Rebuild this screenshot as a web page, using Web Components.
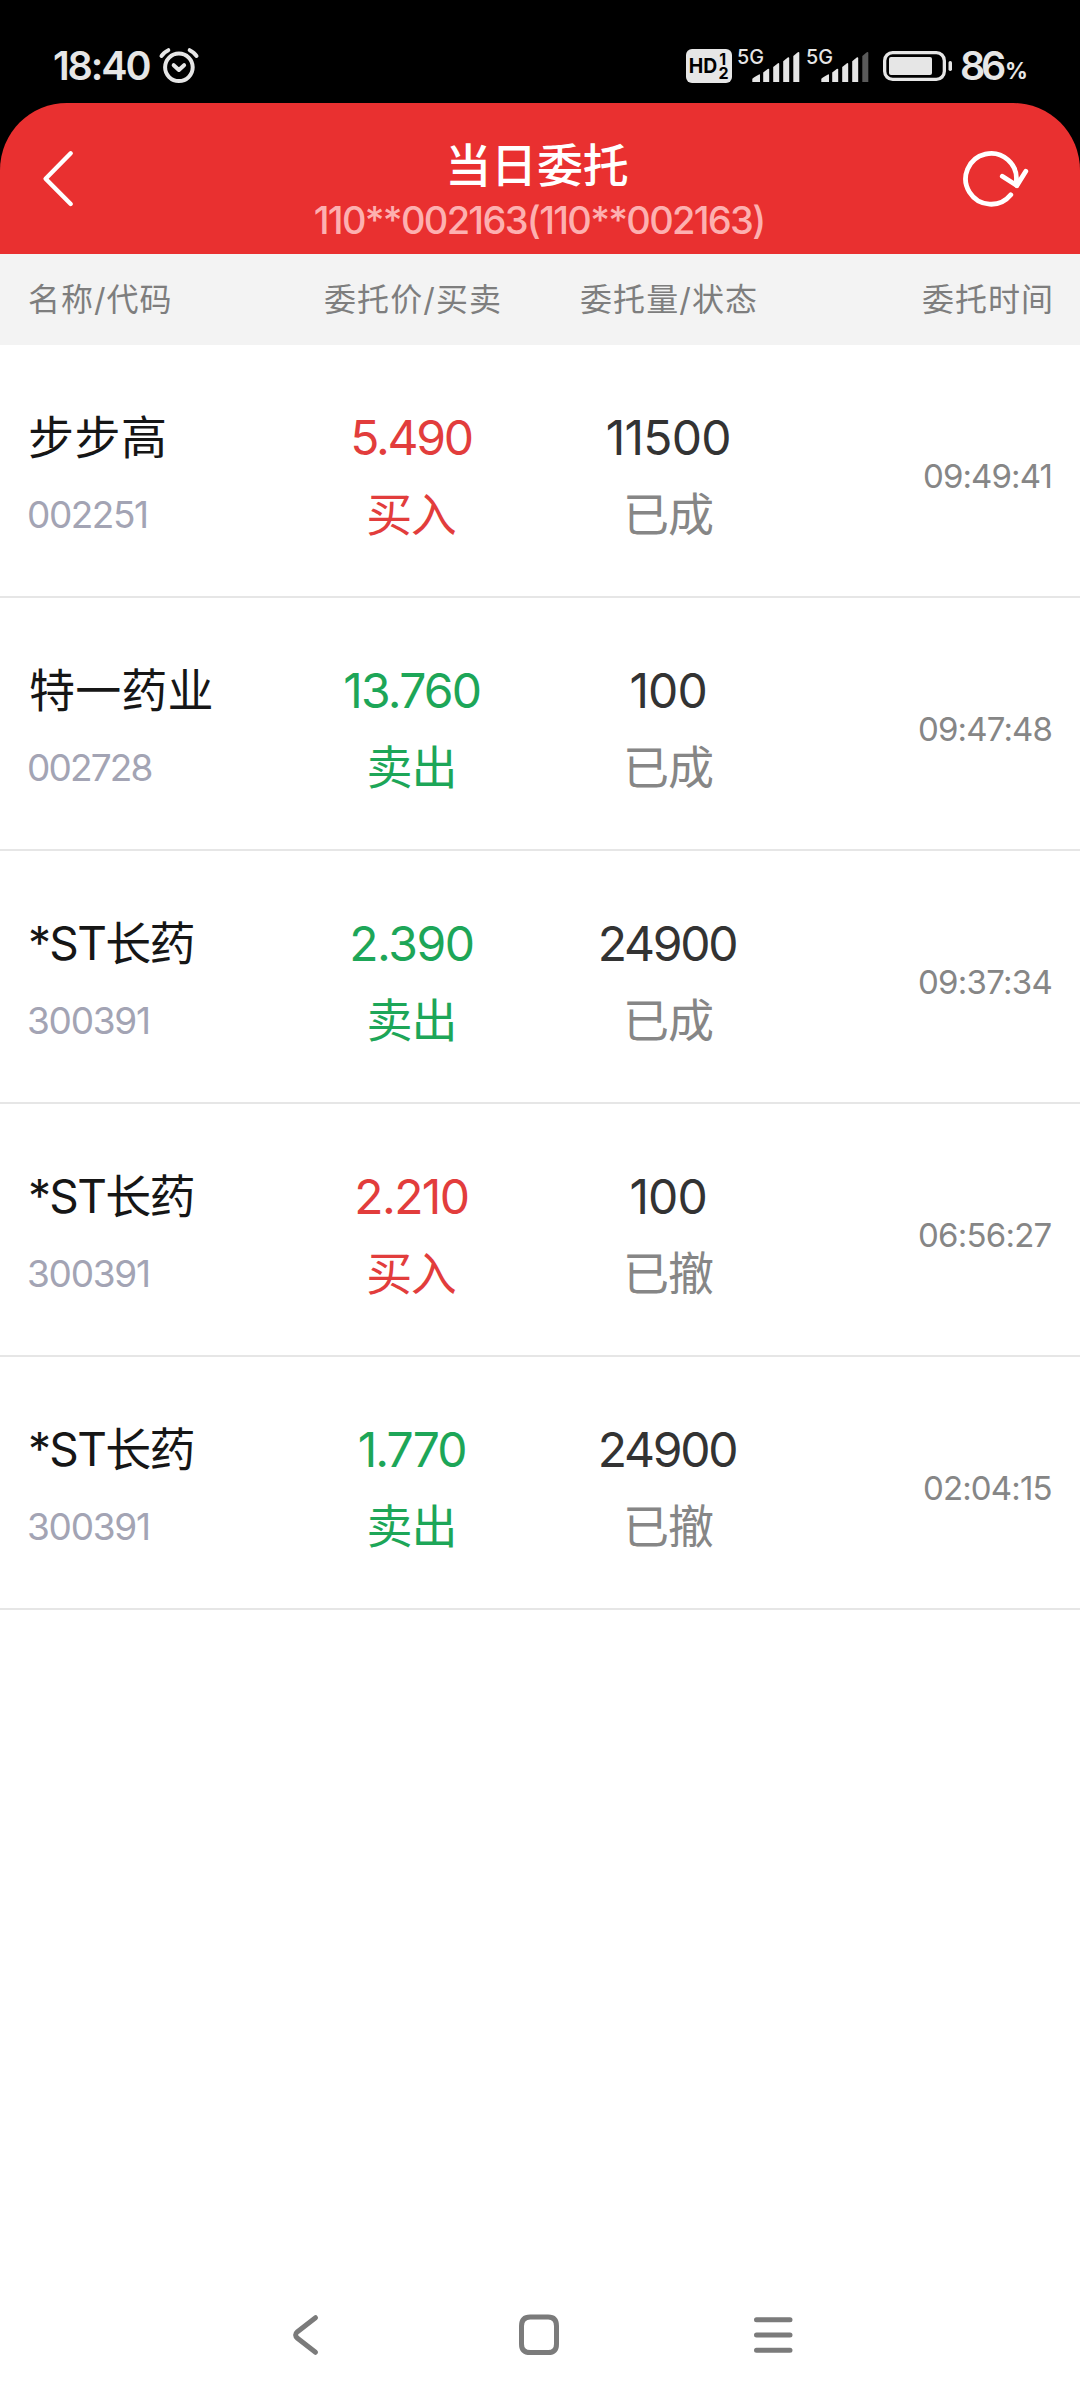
<!DOCTYPE html>
<html lang="zh-CN">
<head>
<meta charset="utf-8">
<title>当日委托</title>
<style>
html,body{margin:0;padding:0;background:#fff}
body{font-family:Inter,"Noto Sans CJK SC",sans-serif}
</style>
</head>
<body>
<order-screen></order-screen>
<script>
const FONT = 'Inter, "Noto Sans CJK SC", sans-serif';
const pen = document.createElement('canvas').getContext('2d');

class Base extends HTMLElement {
  connectedCallback() {
    if (this.shadowRoot) return;
    this.attachShadow({ mode: 'open' }).innerHTML = this.view();
  }
}

/* One line of text, tracked so that its ink is exactly `w` pixels wide. */
customElements.define('fit-text', class extends Base {
  view() {
    const s = +this.getAttribute('s'), w = +this.getAttribute('w'), b = this.getAttribute('b') || 400;
    const t = this.getAttribute('t');
    pen.font = `${b} ${s}px ${FONT}`;
    const m = pen.measureText(t);
    const ink = m.actualBoundingBoxLeft + m.actualBoundingBoxRight;
    const n = [...t].length - 1;
    const ls = n ? (w - ink) / n : 0;
    return `<style>:host{display:block;flex:none;width:${w}px;font:${b} ${s}px/var(--line,77px) ${FONT};white-space:nowrap}
      span{display:block;width:max-content;letter-spacing:${ls.toFixed(3)}px;margin-left:${m.actualBoundingBoxLeft.toFixed(2)}px}</style><span>${t}</span>`;
  }
});

customElements.define('signal-bars', class extends Base {
  view() {
    const weak = this.hasAttribute('weak') ? '#5a5a5a' : '#e6e6e6';
    return `<style>:host{display:block;flex:none;width:62px;height:34px}svg{display:block;overflow:visible}text{font:500 20.5px Inter,sans-serif}</style>
    <svg width="62" height="34" viewBox="0 0 62 34" fill="#e6e6e6">
      <text x="-1" y="15.2" textLength="27" lengthAdjust="spacingAndGlyphs">5G</text>
      <path d="M14.3 33V29.8Q15 28.5 21 25.4Q22 25 22 26V33Z"/>
      <path d="M25.2 33V23.5L29.7 20Q31.2 19.2 31.2 20.5V33Z"/>
      <path d="M35.2 33V18L39.7 14.4Q41.2 13.6 41.2 15V33Z"/>
      <path d="M45.2 33V12.2L49.7 8.6Q51.2 7.8 51.2 9.2V33Z"/>
      <path fill="${weak}" d="M55.3 33V7L59.8 3.2Q61.3 2.4 61.3 3.8V33Z"/>
    </svg>`;
  }
});

customElements.define('hd-badge', class extends Base {
  view() {
    return `<style>:host{display:block;flex:none}svg{display:block}text{font-family:Inter,sans-serif;font-weight:700}</style>
    <svg width="46" height="34" viewBox="0 0 46 34"><rect width="46" height="34" rx="6" fill="#e6e6e6"/>
      <text x="2.8" y="24.2" font-size="19.5" textLength="28.5" lengthAdjust="spacingAndGlyphs">HD</text>
      <text x="33.2" y="15.8" font-size="16">1</text><text x="32.6" y="30.4" font-size="16">2</text></svg>`;
  }
});

customElements.define('battery-icon', class extends Base {
  view() {
    return `<style>:host{display:block;flex:none}svg{display:block}</style>
    <svg width="70" height="34" viewBox="0 0 70 34" fill="#e6e6e6"><rect x="1.65" y="3.65" width="59.7" height="26.7" rx="8" fill="none" stroke="#e6e6e6" stroke-width="3.3"/>
      <rect x="6" y="8" width="43" height="18" rx="2"/><rect x="65.5" y="12" width="3.5" height="10" rx="1.7"/></svg>`;
  }
});

customElements.define('status-bar', class extends Base {
  view() {
    return `<style>:host{display:flex;height:103px;align-items:flex-start;color:#e6e6e6;box-sizing:border-box;padding:49px 54px 0;--line:35px}
      .alarm{margin:-2px 0 0 7px;flex:none}.gap{flex:1}.pct{--line:44px;margin-left:2px}</style>
    <fit-text t="18:40" s="39.5" b="600" w="96.5"></fit-text>
    <svg class="alarm" width="42" height="38" viewBox="157.5 47 42 38" fill="none" stroke="#e6e6e6" stroke-width="4" stroke-linecap="round" stroke-linejoin="round">
      <circle cx="178.4" cy="67.3" r="13.8"/><path d="M173.2 65.2L178.4 70L183.6 65.2"/><path d="M161 56Q163 52.5 167.8 50.2M196 56Q194 52.5 189.2 50.2"/></svg>
    <div class="gap"></div>
    <hd-badge></hd-badge>
    <signal-bars style="margin-left:6px"></signal-bars>
    <signal-bars weak style="margin-left:7px"></signal-bars>
    <battery-icon style="margin-left:14px"></battery-icon>
    <fit-text style="margin-left:8px" t="86" s="39.5" b="600" w="44"></fit-text>
    <fit-text class="pct" t="%" s="22.5" b="700" w="19"></fit-text>`;
  }
});

customElements.define('title-bar', class extends Base {
  view() {
    return `<style>:host{display:block;background:#000}
      header{display:flex;justify-content:space-between;height:151px;background:#e93030;border-radius:67px 67px 0 0;box-sizing:border-box;padding:0 43px 0 40px}
      div{display:flex;flex-direction:column;align-items:center;padding-top:34px;margin-left:1px;--line:56px}
      .t{color:#fff}.s{color:#fdb0b0;--line:54px}svg{flex:none}</style>
    <header>
      <svg width="76" height="151" viewBox="40 103 76 151" fill="none" stroke="#fff" stroke-width="4.4" stroke-linecap="round" stroke-linejoin="round"><path d="M70.7 153.3L45.6 178.7L70.7 204"/></svg>
      <div><fit-text class="t" t="当日委托" s="46" b="500" w="177.5"></fit-text><fit-text class="s" t="110**002163(110**002163)" s="38" b="500" w="448.5"></fit-text></div>
      <svg width="76" height="151" viewBox="961 103 76 151" fill="none" stroke="#fff" stroke-width="4.8" stroke-linecap="round" stroke-linejoin="round"><path d="M1010.8 194.8A25.4 25.4 0 1 1 1016.3 181.5L1016.8 185.6"/><path d="M1002.3 176.3L1016.8 185.6L1025.8 171.3"/></svg>
    </header>`;
  }
});

const GRID = 'display:grid;grid-template-columns:284px 257px 255px 284px;box-sizing:border-box;';

customElements.define('table-head', class extends Base {
  view() {
    return `<style>:host{${GRID}height:91px;background:#f3f3f3;color:#7e7e7e;--line:91px;justify-items:center}
      .l{justify-self:start;margin-left:29px}.r{justify-self:end;margin-right:29px}</style>
    <fit-text class="l" t="名称/代码" s="32" w="141.5"></fit-text><fit-text t="委托价/买卖" s="32" w="175"></fit-text>
    <fit-text t="委托量/状态" s="32" w="175"></fit-text><fit-text class="r" t="委托时间" s="32" w="128"></fit-text>`;
  }
});

customElements.define('order-row', class extends Base {
  view() {
    const [name, nw, code, cw, price, pw, side, qty, qw, state, time, tw] = this.getAttribute('data').split('|');
    const buy = side === '买入';
    return `<style>:host{${GRID}height:253px;border-bottom:2px solid #e6e6e6;padding-top:54px;align-items:start}
      div{display:flex;flex-direction:column;align-items:center}
      .n{align-items:flex-start;padding-left:30px;color:#161616}.c{color:#a3a4b4;margin-left:-1px}
      .p{color:${buy ? '#e23d3c' : '#1da658'}}.q{color:#333}.g{color:#868686;margin-left:3px}.d{margin-right:${buy ? 1 : 3}px}
      .t{align-items:flex-end;padding:39px 28.5px 0 0;color:#868686}.o{margin-right:1px}</style>
    <div class="n"><fit-text t="${name}" s="46" w="${nw}"></fit-text><fit-text class="c" t="${code}" s="37" w="${cw}"></fit-text></div>
    <div class="p"><fit-text t="${price}" s="48" w="${pw}"></fit-text><fit-text class="d" t="${side}" s="46" w="${buy ? 87.5 : 85}"></fit-text></div>
    <div class="q"><fit-text t="${qty}" s="48" w="${qw}"></fit-text><fit-text class="g" t="${state}" s="46" w="86"></fit-text></div>
    <div class="t"><fit-text class="${time.endsWith('1') ? 'o' : ''}" t="${time}" s="33" w="${tw}"></fit-text></div>`;
  }
});

customElements.define('nav-bar', class extends Base {
  view() {
    return `<style>:host{display:flex;justify-content:space-between;align-items:center;height:130px;box-sizing:border-box;padding:0 286px 0 285px}svg{display:block}</style>
    <svg width="42" height="42" viewBox="285 2314 42 42" fill="none" stroke="#7b7b7b" stroke-width="5" stroke-linecap="round"><path d="M315.5 2317.7L297.5 2331.7Q293.7 2335 297.5 2338.3L315.5 2352.3"/></svg>
    <svg width="42" height="42" viewBox="0.8 0 42 42" fill="none" stroke="#7b7b7b" stroke-width="5"><path d="M12 3H30Q38.3 3 38.3 12V30Q38.3 38.6 30 38.6H12Q3.3 38.6 3.3 30V12Q3.3 3 12 3Z"/></svg>
    <svg width="42" height="42" viewBox="752 2314 42 42" stroke="#7b7b7b" stroke-width="5" stroke-linecap="round"><path d="M756.5 2319.7H790M756.5 2335H790M756.5 2350.3H790"/></svg>`;
  }
});

customElements.define('order-screen', class extends Base {
  view() {
    const rows = [
      '步步高|135|002251|117|5.490|118.5|买入|11500|121.5|已成|09:49:41|126.5',
      '特一药业|181.5|002728|122.5|13.760|134.5|卖出|100|74|已成|09:47:48|132.5',
      '*ST长药|163.5|300391|119|2.390|120.5|卖出|24900|135.5|已成|09:37:34|132.5',
      '*ST长药|163.5|300391|119|2.210|110.5|买入|100|74|已撤|06:56:27|132.5',
      '*ST长药|163.5|300391|119|1.770|105.5|卖出|24900|135.5|已撤|02:04:15|127.5'
    ];
    return `<style>:host{display:flex;flex-direction:column;width:1080px;height:2400px;background:#fff;overflow:hidden}
      status-bar{background:#000}main{flex:1}</style>
    <status-bar></status-bar><title-bar></title-bar><table-head></table-head>
    <main>${rows.map(r => `<order-row data="${r}"></order-row>`).join('')}</main>
    <nav-bar></nav-bar>`;
  }
});
</script>
</body>
</html>
